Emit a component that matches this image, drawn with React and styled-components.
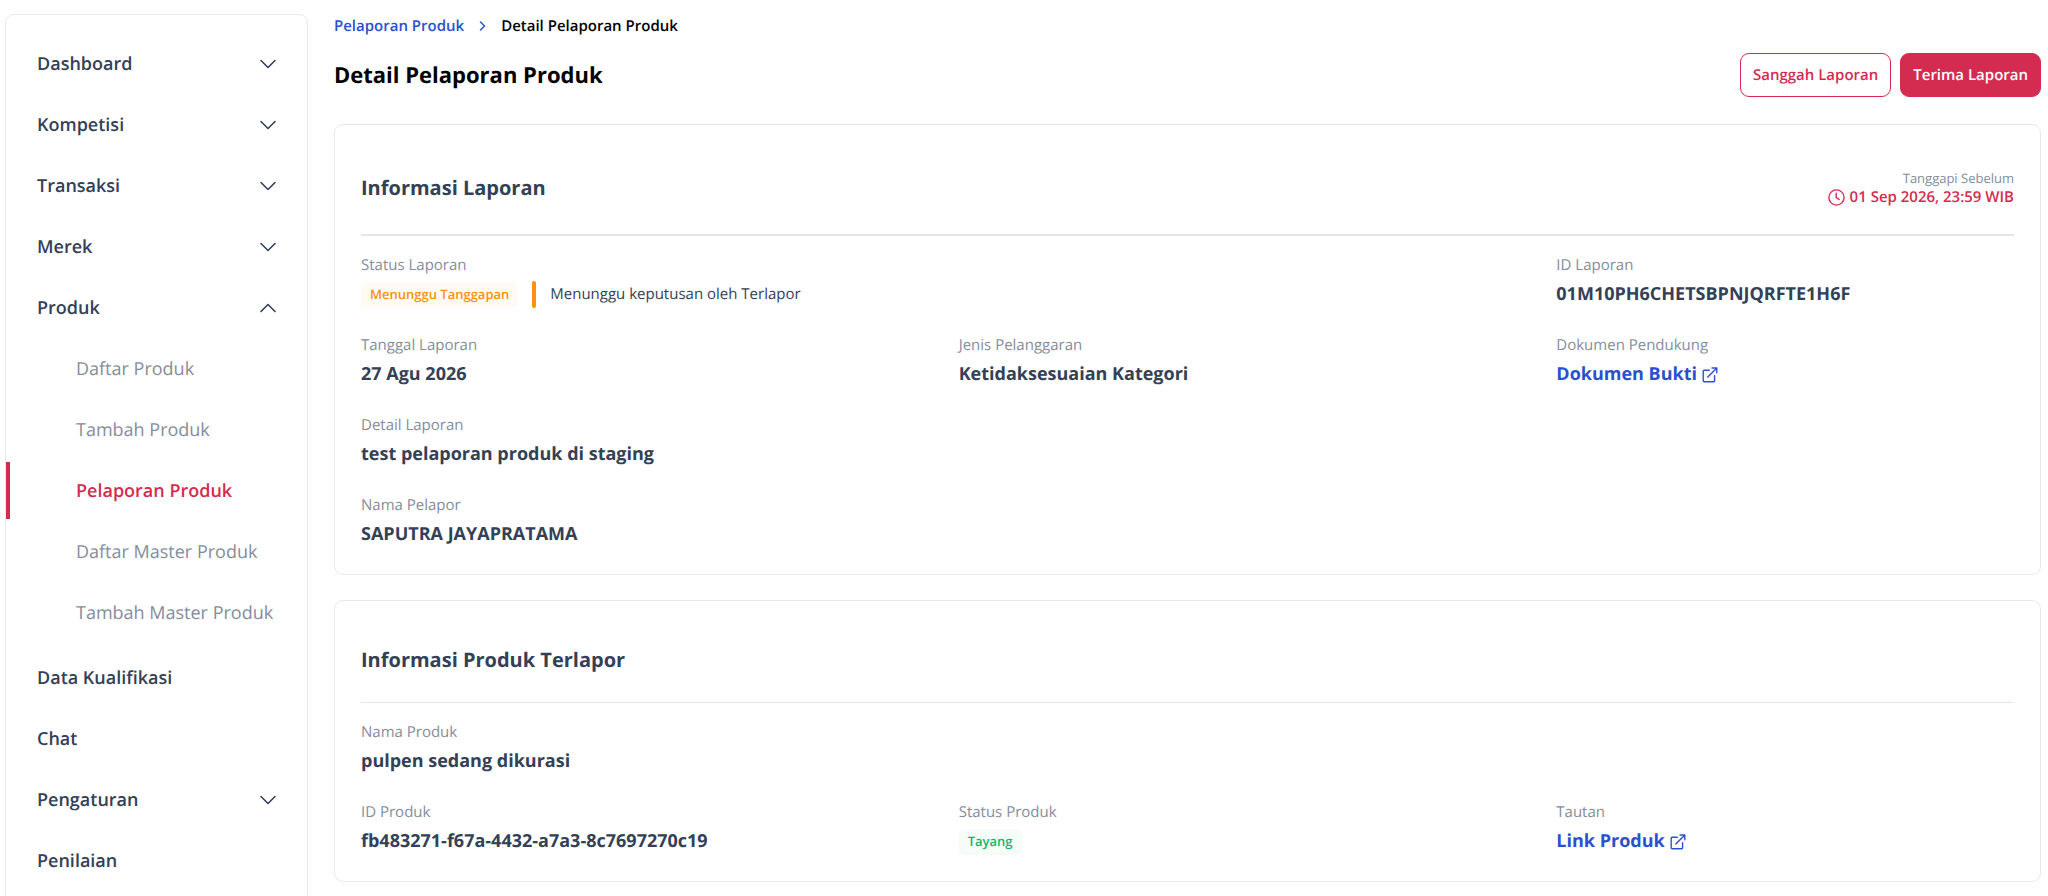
import React, { useState } from 'react';
import styled, { createGlobalStyle } from 'styled-components';

const GlobalStyle = createGlobalStyle`
    *, *::before, *::after {
        box-sizing: border-box;
    }
    body {
        margin: 0;
        background: #ffffff;
        color: #344056;
        font-family: 'Open Sans', 'Noto Sans', sans-serif;
        font-size: 15px;
        text-rendering: geometricPrecision;
        overflow: hidden;
    }
    button {
        font-family: inherit;
        text-rendering: inherit;
        cursor: pointer;
    }
    a {
        text-decoration: none;
    }
    ul, ol, dl, dd, h1, h2, p {
        margin: 0;
        padding: 0;
        list-style: none;
    }
`;

const Page = styled.div`
    display: flex;
    align-items: stretch;
    gap: 26px;
    height: 100vh;
    overflow: hidden;
    padding: 14px 7px 0 5px;
`;

const Sidebar = styled.nav`
    flex: 0 0 303px;
    padding-top: 18px;
    border: 1px solid #e8e9eb;
    border-bottom: 0;
    border-radius: 9px 9px 0 0;
`;

const MenuButton = styled.button`
    display: flex;
    align-items: center;
    justify-content: space-between;
    width: 100%;
    height: 61px;
    padding: 0 31px;
    border: 0;
    background: none;
    color: #344056;
    font-size: 18px;
    font-weight: 600;
    line-height: 26px;
    text-align: left;
`;

const SubMenu = styled.ul`
    padding: 2px 0;
`;

const SubLink = styled.a`
    display: flex;
    align-items: center;
    height: 57px;
    margin-bottom: 4px;
    padding-left: 66px;
    border-left: 4px solid ${props => props.$active ? '#d32c50' : 'transparent'};
    color: ${props => props.$active ? '#d32c50' : '#848d9c'};
    font-size: 18px;
    font-weight: ${props => props.$active ? 600 : 400};
`;

const Main = styled.main`
    flex: 1;
    min-width: 0;
`;

const Breadcrumb = styled.ol`
    display: flex;
    align-items: center;
    height: 24px;
    gap: 15px;
    font-size: 15px;
    font-weight: 600;
    color: #000000;

    li {
        display: flex;
        align-items: center;
        gap: 15px;
    }
    a {
        color: #2b50cf;
    }
`;

const TitleRow = styled.header`
    display: flex;
    align-items: center;
    justify-content: space-between;
    margin: 15px 0 27px;
`;

const Title = styled.h1`
    color: #000000;
    font-size: 22px;
    font-weight: 700;
    line-height: 32px;
`;

const Actions = styled.div`
    display: flex;
    gap: 9px;
`;

const Button = styled.button`
    height: 44px;
    padding: 0 12px;
    border: 1px solid #d32c50;
    border-radius: 9px;
    background: ${props => props.$primary ? '#d32c50' : '#ffffff'};
    color: ${props => props.$primary ? '#ffffff' : '#d32c50'};
    font-size: 15px;
    font-weight: 600;
`;

const Card = styled.section`
    margin-bottom: 25px;
    padding: 0 26px 26px;
    border: 1px solid #e8e9eb;
    border-radius: 9px;
`;

const CardHeader = styled.div`
    display: flex;
    align-items: center;
    justify-content: space-between;
    padding: 44px 0 27px;
    border-bottom: ${props => props.$thick ? '2px' : '1px'} solid #e4e6ea;
`;

const CardTitle = styled.h2`
    font-size: 20px;
    font-weight: 700;
    line-height: 30px;
`;

const Deadline = styled.div`
    text-align: right;
`;

const DeadlineLabel = styled.p`
    color: #848d9c;
    font-size: 13px;
    line-height: 18px;
`;

const DeadlineTime = styled.p`
    display: flex;
    align-items: center;
    justify-content: flex-end;
    gap: 5px;
    color: #d32c50;
    font-size: 15px;
    font-weight: 600;
    line-height: 20px;
`;

const Fields = styled.dl`
    display: grid;
    grid-template-columns: repeat(3, minmax(0, 1fr));
    gap: 27px 140px;
    padding-top: 19px;
`;

const Item = styled.div`
    grid-column: span ${props => props.$span || 1};
`;

const Label = styled.dt`
    margin-bottom: 6px;
    color: #848d9c;
    font-size: 15px;
    line-height: 20px;
`;

const Value = styled.dd`
    display: flex;
    align-items: center;
    height: 27px;
    font-size: 18px;
    font-weight: 700;
    line-height: 27px;
    white-space: nowrap;
`;

const ValueLink = styled.a`
    display: flex;
    align-items: center;
    gap: 5px;
    color: #2b50cf;
`;

const tones = {
    waiting: { color: '#fb920f', background: '#fffbf4' },
    live: { color: '#17b666', background: '#f6fdf9' },
};

const Badge = styled.span`
    height: 26px;
    padding: 0 9px;
    border-radius: 5px;
    background: ${props => tones[props.$tone].background};
    color: ${props => tones[props.$tone].color};
    font-size: 13px;
    font-weight: 600;
    line-height: 24px;
`;

const Note = styled.span`
    display: flex;
    align-items: center;
    margin-left: 14px;
    font-size: 15px;
    font-weight: 400;

    &::before {
        content: '';
        width: 4px;
        height: 27px;
        margin-right: 14px;
        border-radius: 2px;
        background: #fb920f;
    }
`;

const Chevron = ({ up }) => (
    <svg width="16" height="10" viewBox="0 0 16 10" fill="none" stroke="currentColor" strokeWidth="1.6" strokeLinecap="round" strokeLinejoin="round" aria-hidden="true">
        <path d={up ? 'M1 8.5 8 1.5l7 7' : 'M1 1.5l7 7 7-7'} />
    </svg>
);

const ArrowRight = () => (
    <svg width="7" height="10" viewBox="0 0 7 10" fill="none" stroke="#2b50cf" strokeWidth="1.5" strokeLinecap="round" strokeLinejoin="round" aria-hidden="true">
        <path d="M1.5 1 5.5 5l-4 4" />
    </svg>
);

const Clock = () => (
    <svg width="17" height="17" viewBox="0 0 17 17" fill="none" stroke="currentColor" strokeWidth="1.4" strokeLinecap="round" strokeLinejoin="round" aria-hidden="true">
        <circle cx="8.5" cy="8.5" r="7.6" />
        <path d="M8.2 4.2v4.4l3 1.7" />
    </svg>
);

const External = () => (
    <svg width="16" height="16" viewBox="0 0 16 16" fill="none" stroke="currentColor" strokeWidth="1.4" strokeLinecap="round" strokeLinejoin="round" aria-hidden="true">
        <path d="M7.3 3.2H2.2a1 1 0 0 0-1 1v9.6a1 1 0 0 0 1 1h9.4a1 1 0 0 0 1-1V8.6" />
        <path d="M5.8 10 14.6 1.2M10 1h4.8v4.8" />
    </svg>
);

const menu = [
    { name: 'Dashboard', items: [] },
    { name: 'Kompetisi', items: [] },
    { name: 'Transaksi', items: [] },
    { name: 'Merek', items: [] },
    {
        name: 'Produk',
        items: ['Daftar Produk', 'Tambah Produk', 'Pelaporan Produk', 'Daftar Master Produk', 'Tambah Master Produk'],
    },
    { name: 'Data Kualifikasi' },
    { name: 'Chat' },
    { name: 'Pengaturan', items: [] },
    { name: 'Penilaian' },
];

function Field({ label, span, children }) {
    return (
        <Item $span={span}>
            <Label>{label}</Label>
            <Value>{children}</Value>
        </Item>
    );
}

function Menu() {
    const [open, setOpen] = useState('Produk');

    return (
        <Sidebar>
            <ul>
                {menu.map(({ name, items }) => (
                    <li key={name}>
                        <MenuButton
                            type="button"
                            aria-expanded={items ? open === name : undefined}
                            onClick={() => items && setOpen(open === name ? '' : name)}
                        >
                            {name}
                            {items && <Chevron up={open === name} />}
                        </MenuButton>
                        {items && items.length > 0 && open === name && (
                            <SubMenu>
                                {items.map(item => (
                                    <li key={item}>
                                        <SubLink href="#" $active={item === 'Pelaporan Produk'}>{item}</SubLink>
                                    </li>
                                ))}
                            </SubMenu>
                        )}
                    </li>
                ))}
            </ul>
        </Sidebar>
    );
}

export default function App() {
    return (
        <>
            <GlobalStyle />
            <Page>
                <Menu />
                <Main>
                    <Breadcrumb>
                        <li><a href="#">Pelaporan Produk</a> <ArrowRight /></li>
                        <li>Detail Pelaporan Produk</li>
                    </Breadcrumb>
                    <TitleRow>
                        <Title>Detail Pelaporan Produk</Title>
                        <Actions>
                            <Button type="button">Sanggah Laporan</Button>
                            <Button type="button" $primary>Terima Laporan</Button>
                        </Actions>
                    </TitleRow>

                    <Card>
                        <CardHeader $thick>
                            <CardTitle>Informasi Laporan</CardTitle>
                            <Deadline>
                                <DeadlineLabel>Tanggapi Sebelum</DeadlineLabel>
                                <DeadlineTime><Clock /> 01 Sep 2026, 23:59 WIB</DeadlineTime>
                            </Deadline>
                        </CardHeader>
                        <Fields>
                            <Field label="Status Laporan" span={2}>
                                <Badge $tone="waiting">Menunggu Tanggapan</Badge>
                                <Note>Menunggu keputusan oleh Terlapor</Note>
                            </Field>
                            <Field label="ID Laporan">01M10PH6CHETSBPNJQRFTE1H6F</Field>
                            <Field label="Tanggal Laporan">27 Agu 2026</Field>
                            <Field label="Jenis Pelanggaran">Ketidaksesuaian Kategori</Field>
                            <Field label="Dokumen Pendukung">
                                <ValueLink href="#">Dokumen Bukti <External /></ValueLink>
                            </Field>
                            <Field label="Detail Laporan" span={3}>test pelaporan produk di staging</Field>
                            <Field label="Nama Pelapor" span={3}>SAPUTRA JAYAPRATAMA</Field>
                        </Fields>
                    </Card>

                    <Card>
                        <CardHeader>
                            <CardTitle>Informasi Produk Terlapor</CardTitle>
                        </CardHeader>
                        <Fields>
                            <Field label="Nama Produk" span={3}>pulpen sedang dikurasi</Field>
                            <Field label="ID Produk">fb483271-f67a-4432-a7a3-8c7697270c19</Field>
                            <Field label="Status Produk">
                                <Badge $tone="live">Tayang</Badge>
                            </Field>
                            <Field label="Tautan">
                                <ValueLink href="#">Link Produk <External /></ValueLink>
                            </Field>
                        </Fields>
                    </Card>
                </Main>
            </Page>
        </>
    );
}
